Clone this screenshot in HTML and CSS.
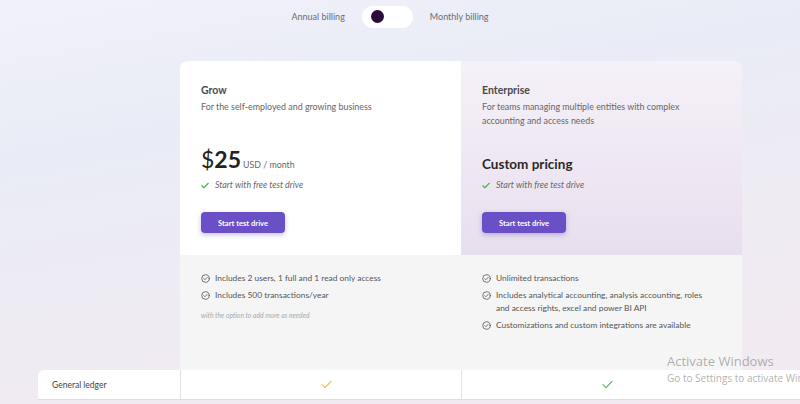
FILE: index.html
```html
<!DOCTYPE html>
<html lang="en">

<head>
    <meta charset="UTF-8">
    <meta name="viewport" content="width=device-width, initial-scale=1.0">
    <title>Pricing</title>
    <link rel="stylesheet" href="styles.css">
</head>

<body>
    <div class="billing">
        <span>Annual billing</span>
        <div class="toggle"><div class="knob"></div></div>
        <span>Monthly billing</span>
    </div>

    <div class="plans">
        <div class="spacer"></div>

        <div class="plan grow">
            <div class="plan-top">
                <h2>Grow</h2>
                <p class="desc">For the self-employed and growing business</p>
                <div class="price"><span class="cur">$</span><span class="amount">25</span><span class="per">USD / month</span></div>
                <p class="trial"><svg class="tick" viewBox="0 0 10 8"><path d="M1 4.3 3.6 6.8 9 1.2" /></svg>Start with free test drive</p>
                <button class="cta">Start test drive</button>
            </div>
            <div class="plan-features">
                <ul>
                    <li><svg viewBox="0 0 10 10"><circle cx="5" cy="5" r="4.2" /><path d="M3.1 5.1 4.4 6.4 6.9 3.7" /></svg>Includes 2 users, 1 full and 1 read only access</li>
                    <li><svg viewBox="0 0 10 10"><circle cx="5" cy="5" r="4.2" /><path d="M3.1 5.1 4.4 6.4 6.9 3.7" /></svg>Includes 500 transactions/year</li>
                </ul>
                <p class="note">with the option to add more as needed</p>
            </div>
        </div>

        <div class="plan enterprise">
            <div class="plan-top">
                <h2>Enterprise</h2>
                <p class="desc">For teams managing multiple entities with complex accounting and access needs</p>
                <div class="price custom">Custom pricing</div>
                <p class="trial"><svg class="tick" viewBox="0 0 10 8"><path d="M1 4.3 3.6 6.8 9 1.2" /></svg>Start with free test drive</p>
                <button class="cta">Start test drive</button>
            </div>
            <div class="plan-features">
                <ul>
                    <li><svg viewBox="0 0 10 10"><circle cx="5" cy="5" r="4.2" /><path d="M3.1 5.1 4.4 6.4 6.9 3.7" /></svg>Unlimited transactions</li>
                    <li><svg viewBox="0 0 10 10"><circle cx="5" cy="5" r="4.2" /><path d="M3.1 5.1 4.4 6.4 6.9 3.7" /></svg>Includes analytical accounting, analysis accounting, roles and access rights, excel and power BI API</li>
                    <li><svg viewBox="0 0 10 10"><circle cx="5" cy="5" r="4.2" /><path d="M3.1 5.1 4.4 6.4 6.9 3.7" /></svg>Customizations and custom integrations are available</li>
                </ul>
            </div>
        </div>
    </div>

    <div class="compare">
        <div class="row">
            <div class="cell label">General ledger</div>
            <div class="cell"><svg class="yes orange" viewBox="0 0 12 9"><path d="M1 4.5 4.3 8 11 1" /></svg></div>
            <div class="cell"><svg class="yes green" viewBox="0 0 12 9"><path d="M1 4.5 4.3 8 11 1" /></svg></div>
        </div>
    </div>

    <div class="watermark">
        <div class="wm-title">Activate Windows</div>
        <div class="wm-sub">Go to Settings to activate Windows.</div>
    </div>
</body>

</html>
```

FILE: styles.css
```css
* {
    margin: 0;
    padding: 0;
    box-sizing: border-box;
}

html,
body {
    width: 800px;
    height: 404px;
    overflow: hidden;
}

body {
    position: relative;
    font-family: Lato, "Noto Sans", sans-serif;
    color: #444;
    background: linear-gradient(170deg, #f1f1f9 0%, #e9ecf6 30%, #efebf3 65%, #f3eaf0 100%);
}

.billing {
    display: flex;
    align-items: center;
    justify-content: center;
    gap: 17px;
    height: 33px;
    padding-right: 20px;
    font-size: 9px;
    color: #6b6b78;
}

.toggle {
    width: 51px;
    height: 22px;
    border-radius: 11px;
    background: #fff;
    display: flex;
    align-items: center;
    padding-left: 9px;
}

.knob {
    width: 13px;
    height: 13px;
    border-radius: 50%;
    background: #2a0b3c;
}

.plans {
    display: grid;
    grid-template-columns: 142px 281px 281px;
    margin-top: 28px;
    margin-left: 38px;
}

.plan {
    display: flex;
    flex-direction: column;
}

.plan-top {
    height: 194px;
    padding: 22px 21px 0 21px;
    background: #fff;
}

.grow .plan-top {
    border-top-left-radius: 8px;
}

.enterprise .plan-top {
    border-top-right-radius: 8px;
    background: linear-gradient(180deg, #f5f1f8 0%, #efe8f3 50%, #e8dfee 100%);
}

h2 {
    font-size: 10.5px;
    font-weight: 700;
    color: #4a4a4a;
    line-height: 14px;
}

.desc {
    margin-top: 3px;
    font-size: 8.9px;
    line-height: 14px;
    color: #666;
    height: 42px;
}

.enterprise .desc {
    padding-right: 40px;
}

.price {
    display: flex;
    align-items: baseline;
    height: 30px;
    margin-top: 3px;
    color: #222;
}

.cur {
    font-size: 23px;
    font-weight: 400;
}

.amount {
    font-size: 23px;
    font-weight: 700;
}

.per {
    margin-left: 2px;
    font-size: 8.8px;
    color: #666;
}

.custom {
    font-size: 13.5px;
    font-weight: 700;
    align-items: center;
    padding-top: 8px;
    color: #2a2a2a;
}

.trial {
    display: flex;
    align-items: center;
    margin-top: 4px;
    font-size: 8.8px;
    font-style: italic;
    color: #666;
    line-height: 12px;
}

.tick {
    width: 8px;
    height: 7px;
    margin-right: 6px;
    fill: none;
    stroke: #4caf50;
    stroke-width: 1.4;
    stroke-linecap: round;
    stroke-linejoin: round;
}

.cta {
    margin-top: 21px;
    width: 84px;
    height: 21px;
    border: none;
    border-radius: 4px;
    background: #6a4fc6;
    color: #fff;
    font-family: Lato, "Noto Sans", sans-serif;
    font-size: 7.6px;
    font-weight: 700;
    box-shadow: 0 2px 5px rgba(80, 50, 170, 0.3);
}

.plan-features {
    height: 115px;
    padding: 17px 21px 0 21px;
    background: #f5f5f5;
}

.plan-features ul {
    list-style: none;
}

.plan-features li {
    display: flex;
    align-items: flex-start;
    font-size: 8.4px;
    line-height: 13px;
    color: #555;
    margin-bottom: 4px;
    padding-right: 14px;
}

.plan-features svg {
    flex: none;
    width: 9px;
    height: 9px;
    margin-top: 2px;
    margin-right: 5px;
    fill: none;
    stroke: #555;
    stroke-width: 0.9;
    stroke-linecap: round;
    stroke-linejoin: round;
}

.note {
    margin-top: 9px;
    font-size: 6.8px;
    font-style: italic;
    color: #aaa;
}

.compare {
    margin-left: 38px;
}

.row {
    display: grid;
    grid-template-columns: 142px 281px 281px;
    height: 30px;
    background: #fff;
    border-bottom: 1px solid #ddd;
    border-top-left-radius: 6px;
}

.cell {
    display: flex;
    align-items: center;
    justify-content: center;
    border-left: 1px solid #e2e2e2;
}

.cell.label {
    justify-content: flex-start;
    padding-left: 14px;
    border-left: none;
    font-size: 8.5px;
    color: #444;
}

.yes {
    width: 11px;
    height: 9px;
    margin-left: 10px;
    fill: none;
    stroke-width: 1.1;
    stroke-linecap: round;
    stroke-linejoin: round;
}

.orange {
    stroke: #f0b43c;
}

.green {
    stroke: #4caf50;
}

.watermark {
    position: absolute;
    left: 667px;
    top: 353px;
    white-space: nowrap;
    font-family: "Open Sans", sans-serif;
    color: rgba(150, 150, 150, 0.75);
}

.wm-title {
    font-size: 13px;
    line-height: 16px;
}

.wm-sub {
    font-size: 10px;
    line-height: 14px;
    margin-top: 2px;
}
```
